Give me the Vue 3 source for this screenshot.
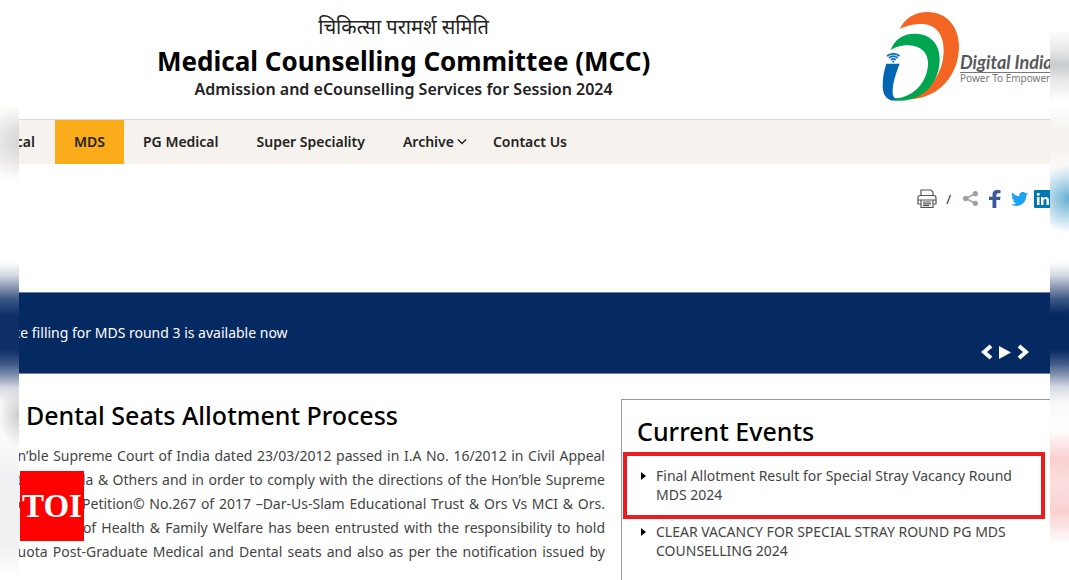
<script setup>
const navItems = [
  { label: 'Medical', clipped: true },
  { label: 'MDS', active: true },
  { label: 'PG Medical' },
  { label: 'Super Speciality' },
  { label: 'Archive', menu: true },
  { label: 'Contact Us' },
]
const lines = [
  'on’ble Supreme Court of India dated 23/03/2012 passed in I.A No. 16/2012 in Civil Appeal',
  'ate of Kerala & Others and in order to comply with the directions of the Hon’ble Supreme',
  'Cc. in Writ Petition© No.267 of 2017 –Dar-Us-Slam Educational Trust & Ors Vs MCI & Ors.',
  's. Ministry of Health & Family Welfare has been entrusted with the responsibility to hold',
  'quota Post-Graduate Medical and Dental seats and also as per the notification issued by',
]
const events = [
  { text: 'Final Allotment Result for Special Stray Vacancy Round MDS 2024', marked: true },
  { text: 'CLEAR VACANCY FOR SPECIAL STRAY ROUND PG MDS COUNSELLING 2024' },
]
</script>

<template>
  <div class="frame">
    <div class="edge edge-left"></div>
    <div class="page">
      <header class="header">
        <div class="titles">
          <p class="hindi" lang="hi">चिकित्सा परामर्श समिति</p>
          <h1>Medical Counselling Committee (MCC)</h1>
          <p class="tagline">Admission and eCounselling Services for Session 2024</p>
        </div>
        <a class="logo" href="#" aria-label="Digital India">
          <svg viewBox="66 33 234 273" width="78" height="91" aria-hidden="true">
            <path fill="#f26522" d="M119 87C136 53 165 36 203 36C260 36 297 81 297 138C297 224 239 293 151 298C210 272 250 220 251 153C252 108 231 74 188 72C160 71 139 78 119 87Z" />
            <path fill="#00a54f" d="M92 150C103 119 129 101 164 101C211 101 239 131 239 178C239 250 187 302 122 302C108 303 99 300 94 294C151 302 204 250 204 190C204 157 181 137 147 136C122 135 106 142 92 150Z" />
            <path fill="#0066b3" d="M79 191H119C108 219 99 246 98 270C97 286 101 295 113 301C82 306 68 287 68 257C68 233 72 211 79 191Z" />
            <g fill="none" stroke="#1675bc" stroke-width="6">
              <path d="M81 168Q100 154 119 168" />
              <path d="M87 174Q100 164 113 174" />
              <path d="M93 180Q100 174 107 180" />
            </g>
            <circle cx="100" cy="185" r="3" fill="#1675bc" />
          </svg>
          <span class="logo-text">
            <span class="logo-name">Digital India</span>
            <span class="logo-motto">Power To Empower</span>
          </span>
        </a>
      </header>

      <nav class="nav">
        <a v-for="item in navItems" :key="item.label" href="#" :class="{ active: item.active, clipped: item.clipped, menu: item.menu }">
          {{ item.label }}<svg v-if="item.menu" width="10" height="8" viewBox="0 0 10 8" aria-hidden="true"><path d="M1 1.5L5 5.5L9 1.5" fill="none" stroke="#222" stroke-width="1.4" /></svg>
        </a>
      </nav>

      <div class="tools">
        <button class="print" aria-label="Print">
          <svg width="20" height="20" viewBox="0 0 20 20" fill="none" stroke="#555" stroke-width="1.2">
            <path d="M4 6.500V1H14L16 3V6.500M4 15H1V9Q1 6.500 3 6.500H17Q19 6.500 19 9V15H16M1 11H19M4 11V18.500H16V11" />
            <path d="M6 13H14M6 14.800H14M6 16.600H12" />
          </svg>
        </button>
        <span class="slash">/</span>
        <button class="share" aria-label="Share">
          <svg width="15" height="15" viewBox="0 0 15 15"><path d="M12.500 2.500L3 7.500L12.500 12.500" fill="none" stroke="#a5a5a5" stroke-width="1.600" /><g fill="#a0a0a0"><circle cx="12.300" cy="2.700" r="2.600" /><circle cx="2.700" cy="7.500" r="2.700" /><circle cx="12.300" cy="12.300" r="2.600" /></g></svg>
        </button>
        <a class="facebook" href="#" aria-label="Facebook">
          <svg width="12" height="18" viewBox="0 0 12 18"><path fill="#3b5998" d="M3.500 18V10H0V6.700H3.500V4.500Q3.500 0 8 0H11.500V3.300H9.300Q7.300 3.300 7.300 5V6.700H11.500L11 10H7.300V18Z" /></svg>
        </a>
        <a class="twitter" href="#" aria-label="Twitter">
          <svg width="17" height="14" viewBox="1 3 22 18" preserveAspectRatio="none"><path fill="#1da1f2" d="M23 5.100c-.8.400-1.700.6-2.600.7.900-.6 1.600-1.400 2-2.500-.9.500-1.800.9-2.900 1.100A4.500 4.500 0 0 0 11.800 8.500C8.100 8.300 4.800 6.500 2.600 3.800c-1.200 2-.6 4.700 1.400 6-.7 0-1.400-.2-2-.6 0 2.200 1.500 4.100 3.600 4.600-.7.200-1.400.2-2 .1.600 1.800 2.200 3.100 4.200 3.100A9.100 9.100 0 0 1 1 18.900C9.700 24.300 20.900 18.200 20.700 7.400c.9-.6 1.700-1.400 2.300-2.300z" /></svg>
        </a>
        <a class="linkedin" href="#" aria-label="LinkedIn">
          <svg width="18" height="18" viewBox="0 0 18 18"><rect width="18" height="18" rx="1" fill="#0077b5" /><path fill="#fff" d="M3 7H5.500V15H3ZM7 7H9.400V8.200C11 6 15 6.500 15 10.200V15H12.500V10.800C12.500 8.200 9.500 8.400 9.500 10.800V15H7Z" /><circle cx="4.250" cy="4.300" r="1.500" fill="#fff" /></svg>
        </a>
      </div>

      <section class="banner">
        <p>Choice filling for MDS round 3 is available now</p>
        <div class="controls">
          <button aria-label="Previous"><svg width="12" height="16" viewBox="0 0 12 16"><path d="M10 2L3 8L10 14" fill="none" stroke="#fff" stroke-width="4" /></svg></button>
          <button aria-label="Play"><svg width="12" height="13" viewBox="0 0 12 13"><path d="M0 0L12 6.500L0 13Z" fill="#fff" /></svg></button>
          <button aria-label="Next"><svg width="12" height="16" viewBox="0 0 12 16"><path d="M2 2L9 8L2 14" fill="none" stroke="#fff" stroke-width="4" /></svg></button>
        </div>
      </section>

      <main class="content">
        <article>
          <h2 class="process">&amp; Dental Seats Allotment Process</h2>
          <p class="copy"><span v-for="line in lines" :key="line">{{ line }}</span></p>
        </article>
        <aside>
          <h2>Current Events</h2>
          <ul>
            <li v-for="event in events" :key="event.text" :class="{ marked: event.marked }"><a href="#">{{ event.text }}</a></li>
          </ul>
        </aside>
      </main>
      <div class="toi">TOI</div>
    </div>
    <div class="edge edge-right"></div>
  </div>
</template>

<style>
body { margin: 0; background: #fff; overflow: hidden; }
</style>

<style scoped>
.frame {
  display: grid;
  grid-template-columns: 19px minmax(0, 1fr) 19px;
  min-height: 100vh;
  font-family: "Noto Sans", "Open Sans", sans-serif;
  color: #222;
}
.frame * { box-sizing: border-box; }
h1, h2, p, ul { margin: 0; padding: 0; }
a { color: inherit; text-decoration: none; }
button { border: 0; padding: 0; background: none; display: block; }
svg { display: block; flex: none; }
.page { position: relative; overflow: hidden; background: #fff; }
.edge { background-repeat: no-repeat; }
.edge-left {
  background-image:
    radial-gradient(ellipse 32px 36px at 19px 142px, #d6d5d3, transparent),
    radial-gradient(ellipse 20px 32px at 19px 415px, #ccc, transparent),
    linear-gradient(to bottom, #fff 100px, #f5f4f2 130px, #f5f4f2 155px, #fff 185px, #fff 262px, #d5dae4 275px, #8594b1 288px, #3d5885 299px, #0f2f67 315px, #0f2f67 350px, #3d5885 364px, #8594b1 376px, #d5dae4 388px, #fafafa 403px, #fafafa 440px, #f0f0f2 480px, #f1f1f1 545px, #fff 578px);
}
.edge-right {
  background-image:
    linear-gradient(to bottom, transparent 30px, #e8e8e9 50px, #c9cacc 65px, #e8e8e9 80px, transparent 102px),
    radial-gradient(ellipse 38px 34px at 19px 199px, #68b0d3, transparent),
    linear-gradient(to bottom, #fff 105px, #f6f3ef 130px, #f6f3ef 150px, #fff 180px, #fff 262px, #d5dae4 275px, #8594b1 288px, #3d5885 299px, #052961 314px, #052961 350px, #3d5885 363px, #8594b1 375px, #d5dae4 387px, #f8f8f8 402px, #fff 430px, #fad0d0 458px, #fbdede 486px, #fad0d0 512px, #fff 545px);
}
.header { display: flex; height: 119px; justify-content: space-between; }
.titles { margin-left: 138px; padding-top: 11px; text-align: center; white-space: nowrap; }
.hindi { font-size: 20px; line-height: 32px; }
h1 { font-size: 26px; line-height: 36px; font-weight: 700; color: #000; }
.tagline { font-size: 16px; line-height: 20px; font-weight: 600; }
.logo { display: flex; width: 168px; padding-top: 11px; white-space: nowrap; color: #58595b; }
.logo-text { display: flex; flex-direction: column; padding-top: 41px; }
.logo-name { font: italic bold 18px/20px Lato, sans-serif; border-bottom: 1px solid #777; }
.logo-motto { font-size: 10px; line-height: 10px; color: #777; }
.nav {
  display: flex;
  height: 45px;
  border-top: 1px solid #dcdcda;
  background: #f6f3ef;
  font-size: 14px;
  font-weight: 600;
  line-height: 44px;
  white-space: nowrap;
}
.nav a { display: flex; align-items: flex-start; gap: 3px; padding: 0 19px; }
.nav .clipped { width: 36px; padding: 0 20px 0 0; justify-content: flex-end; }
.nav .menu { padding-right: 7px; }
.nav svg { margin-top: 18px; }
.nav .active { background: #fbac1b; }
.tools { display: flex; align-items: center; justify-content: flex-end; height: 69px; margin-right: -2px; }
.slash { margin: 0 12px 0 9px; font-size: 13px; }
.facebook { margin-left: 11px; }
.twitter { margin: 0 6px 0 10px; }
.banner {
  display: flex;
  justify-content: space-between;
  height: 82px;
  margin-top: 59px;
  border: solid #6e7fa3;
  border-width: 1px 0;
  background: #052961;
  color: #fff;
}
.banner p { margin-left: -35px; font-size: 14px; line-height: 80px; white-space: nowrap; }
.controls { display: flex; align-items: center; gap: 6px; height: 42px; margin: 38px 21px 0 0; }
.content { display: grid; grid-template-columns: minmax(0, 586fr) minmax(0, 429fr); gap: 16px; padding-top: 25px; }
h2 { font-size: 25px; line-height: 34px; font-weight: 500; color: #000; white-space: nowrap; }
.process { margin: -1px 0 0 -18px; }
.copy { margin: 12px 0 0 -10px; font-size: 14px; line-height: 24px; color: #444; }
.copy span { display: block; text-align: justify; text-align-last: justify; white-space: nowrap; }
aside { min-height: 181px; border: solid #999; border-width: 1px 0 0 1px; }
aside h2 { margin: 14px 0 4px 15px; }
ul { list-style: none; padding-left: 1px; }
li { position: relative; padding: 3px 34px 0 33px; font-size: 14px; line-height: 19px; color: #444; }
li.marked { margin-right: 5px; padding: 10px 20px 11px 29px; border: 4px solid #e91d1f; }
li::before {
  content: "";
  position: absolute;
  left: 18px;
  top: 9px;
  border: solid transparent;
  border-width: 4px 0 4px 5px;
  border-left-color: #000;
}
li.marked::before { left: 14px; top: 16px; }
.toi {
  position: absolute;
  left: 1px;
  top: 471px;
  width: 64px;
  background: #f00;
  color: #fff;
  font: bold 33px/70px "Liberation Serif", serif;
  text-align: center;
}
</style>
